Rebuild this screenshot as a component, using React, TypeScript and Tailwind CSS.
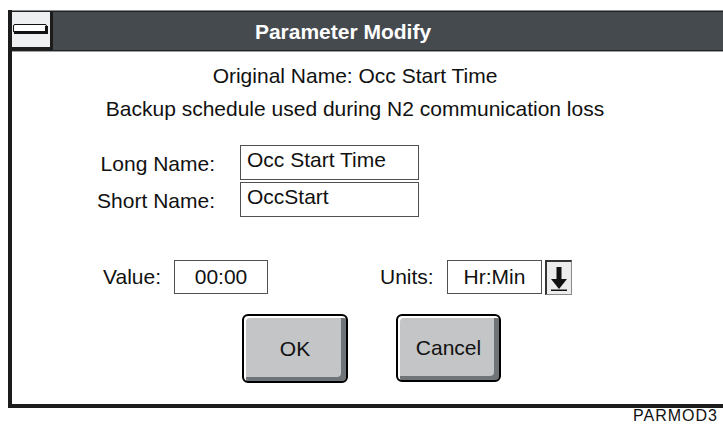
import React from "react";

export default function App() {
  const font = { fontFamily: '"Liberation Sans", Arial, sans-serif' };
  return (
    <div className="w-[723px] h-[424px] bg-white overflow-hidden text-[#111]" style={font}>
      <div className="ml-[8px] mt-[10px] h-[398px] border-l-4 border-b-4 border-[#1c1c1c] flex flex-col">
        {/* Title bar */}
        <div className="h-[42px] flex flex-col">
          <div className="h-px bg-[#8c8c8c]" />
          <div className="flex-1 flex bg-[#454a4f] border-y border-[#1f2326]">
            <div className="w-[41px] h-full bg-[#eeeff1] border-r-[3px] border-b-[3px] border-[#1c1c1c] flex items-center pl-[1px]">
              <svg width="36" height="12" viewBox="0 0 36 12">
                <rect x="0.5" y="0.5" width="33" height="8" rx="1.5" fill="#fff" stroke="#111" strokeWidth="1" />
                <rect x="1" y="7" width="34" height="3" fill="#111" />
                <rect x="32" y="2" width="3" height="8" fill="#111" />
              </svg>
            </div>
            <div className="flex-1 flex items-center justify-center pr-[90px] text-white font-bold text-[21px] leading-none">
              Parameter Modify
            </div>
          </div>
          <div className="h-px bg-[#a0a0a0]" />
        </div>

        {/* Content */}
        <div className="flex-1 flex flex-col text-[21px]">
          <div className="pt-[7px] pr-[25px] text-center leading-[33px]">
            <div>Original Name: Occ Start Time</div>
            <div>Backup schedule used during N2 communication loss</div>
          </div>

          <div className="mt-[20px] grid grid-cols-[203px_179px] gap-x-[25px] gap-y-[2px] leading-[24px]">
            <div className="h-[35px] flex items-center justify-end pt-[3px]">Long Name:</div>
            <div className="h-[35px] border border-[#505050] pl-[6px] pt-[2px]">Occ Start Time</div>
            <div className="h-[35px] flex items-center justify-end pt-[3px]">Short Name:</div>
            <div className="h-[35px] border border-[#505050] pl-[6px] pt-[2px]">OccStart</div>
          </div>

          <div className="mt-[43px] ml-[91px] flex items-center h-[34px] leading-[24px]">
            <span className="w-[58px]">Value:</span>
            <div className="ml-[13px] w-[94px] h-[34px] border border-[#505050] flex items-center justify-center">00:00</div>
            <span className="ml-[112px] w-[53px]">Units:</span>
            <div className="ml-[14px] w-[95px] h-[34px] border border-[#505050] flex items-center justify-center">Hr:Min</div>
            <div className="ml-[3px] w-[27px] h-[35px] bg-[#ececec] border-l-2 border-t-2 border-[#333] border-r border-b border-r-[#888] border-b-[#888] flex items-center justify-center">
              <svg width="18" height="26" viewBox="0 0 18 26">
                <rect x="6.5" y="2" width="5" height="13" fill="#111" />
                <polygon points="1,14 17,14 9,24" fill="#111" />
                <rect x="1" y="24.5" width="16" height="1.5" fill="#111" />
              </svg>
            </div>
          </div>

          <div className="mt-[20px] ml-[230px] flex gap-[48px]">
            <div className="w-[106px] h-[69px] border-2 border-black rounded-[6px] bg-[#c3c5c7] shadow-[inset_2px_2px_0_#ffffff,inset_-5px_-4px_0_#6f7479] flex items-center justify-center">
              OK
            </div>
            <div className="w-[105px] h-[68px] border-2 border-black rounded-[6px] bg-[#c3c5c7] shadow-[inset_2px_2px_0_#ffffff,inset_-5px_-4px_0_#6f7479] flex items-center justify-center">
              Cancel
            </div>
          </div>
        </div>
      </div>
      <div className="pr-[5px] text-right text-[16px] leading-[16px] tracking-[1px]">PARMOD3</div>
    </div>
  );
}
